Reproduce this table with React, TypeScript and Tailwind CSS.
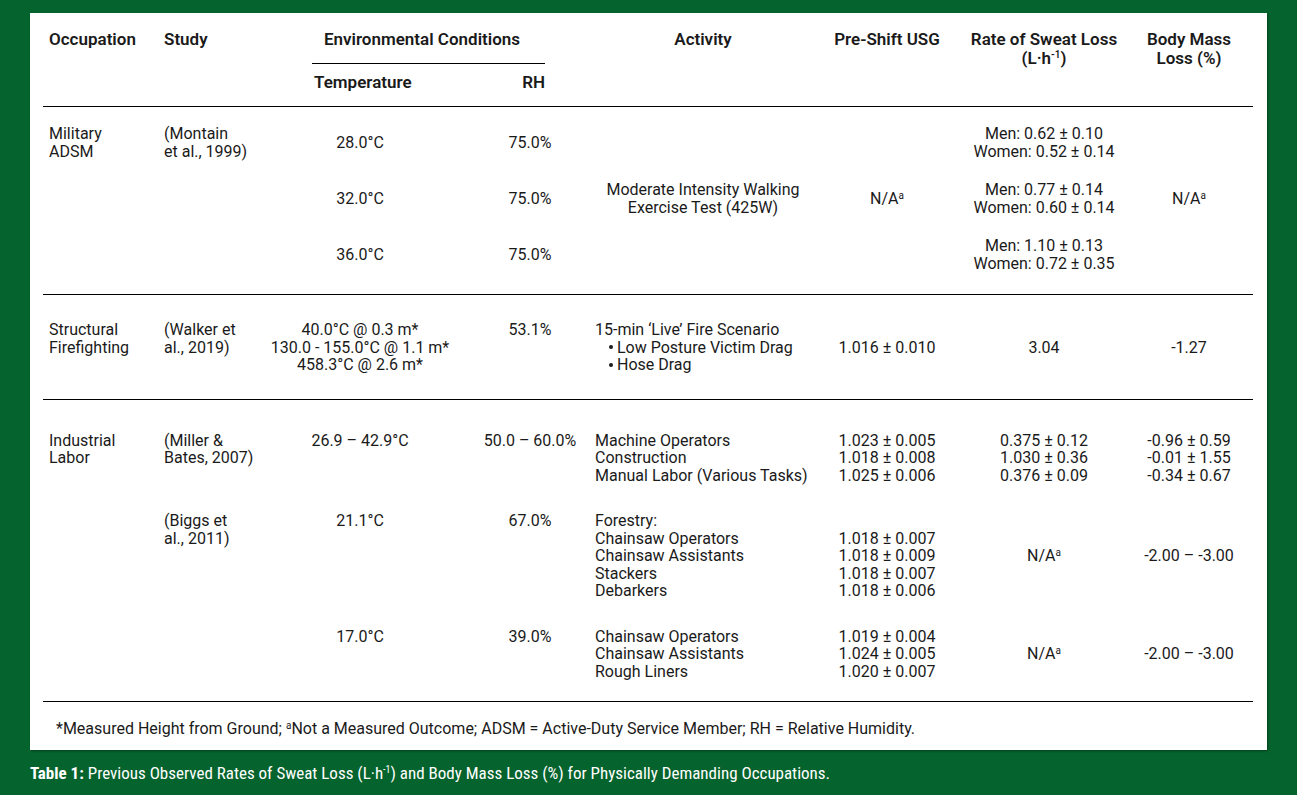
import React from "react";

// column widths (px): occupation, study, temperature, RH, activity, USG, sweat rate, body mass
const COLS = "grid grid-cols-[115px_97px_210px_130px_216px_152px_162px_128px]";

function Sup({ children }: { children: React.ReactNode }) {
  return <span className="text-[10px] leading-none align-top relative top-[1px]">{children}</span>;
}

function NA() {
  return (
    <span>
      N/A<Sup>a</Sup>
    </span>
  );
}

function Lines({ items }: { items: React.ReactNode[] }) {
  return (
    <div className="flex flex-col">
      {items.map((t, i) => (
        <div key={i} className="whitespace-nowrap">
          {t}
        </div>
      ))}
    </div>
  );
}

function Header() {
  return (
    <div className={`${COLS} pt-[17px] pb-[14px] border-b border-black leading-[19px] text-[17px] font-semibold`}>
      <div className="pl-[6px]">Occupation</div>
      <div className="pl-[6px]">Study</div>
      <div className="col-span-2 flex flex-col">
        <div className="text-center pr-[6px]">Environmental Conditions</div>
        <div className="ml-[57px] w-[233px] mt-[14px] border-t border-black pt-[9px] flex justify-between">
          <span className="pl-[2px]">Temperature</span>
          <span>RH</span>
        </div>
      </div>
      <div className="text-center">Activity</div>
      <div className="text-center">Pre-Shift USG</div>
      <div className="text-center whitespace-nowrap">
        Rate of Sweat Loss
        <br />
        (L·h<Sup>-1</Sup>)
      </div>
      <div className="text-center">
        Body Mass
        <br />
        Loss (%)
      </div>
    </div>
  );
}

function MilitaryGroup() {
  const temps = ["28.0°C", "32.0°C", "36.0°C"];
  const rows = ["row-start-1", "row-start-2", "row-start-3"];
  const rates = [
    ["Men: 0.62 ± 0.10", "Women: 0.52 ± 0.14"],
    ["Men: 0.77 ± 0.14", "Women: 0.60 ± 0.14"],
    ["Men: 1.10 ± 0.13", "Women: 0.72 ± 0.35"],
  ];
  return (
    <div className="pt-[18px] pb-[22px] border-b border-black">
      <div className={`${COLS} grid-rows-[35px_35px_35px] gap-y-[21px]`}>
        <div className="col-start-1 row-start-1 row-span-3 pl-[6px]">
          Military
          <br />
          ADSM
        </div>
        <div className="col-start-2 row-start-1 row-span-3 pl-[6px] whitespace-nowrap">
          (Montain
          <br />
          et al., 1999)
        </div>
        {temps.map((t, i) => (
          <React.Fragment key={t}>
            <div className={`col-start-3 ${rows[i]} flex items-center justify-center`}>{t}</div>
            <div className={`col-start-4 ${rows[i]} flex items-center justify-center`}>75.0%</div>
            <div className={`col-start-7 ${rows[i]} text-center whitespace-nowrap`}>
              {rates[i][0]}
              <br />
              {rates[i][1]}
            </div>
          </React.Fragment>
        ))}
        <div className="col-start-5 row-start-1 row-span-3 self-center text-center whitespace-nowrap">
          Moderate Intensity Walking
          <br />
          Exercise Test (425W)
        </div>
        <div className="col-start-6 row-start-1 row-span-3 self-center text-center">
          <NA />
        </div>
        <div className="col-start-8 row-start-1 row-span-3 self-center text-center">
          <NA />
        </div>
      </div>
    </div>
  );
}

function FirefightingGroup() {
  return (
    <div className="pt-[26px] pb-[25px] border-b border-black">
      <div className={COLS}>
        <div className="pl-[6px]">
          Structural
          <br />
          Firefighting
        </div>
        <div className="pl-[6px] whitespace-nowrap">
          (Walker et
          <br />
          al., 2019)
        </div>
        <div className="text-center">
          <Lines items={["40.0°C @ 0.3 m*", "130.0 - 155.0°C @ 1.1 m*", "458.3°C @ 2.6 m*"]} />
        </div>
        <div className="text-center">53.1%</div>
        <div className="whitespace-nowrap">
          <div>15-min ‘Live’ Fire Scenario</div>
          <div className="pl-[14px] flex items-center gap-[4px]">
            <span className="w-[4px] h-[4px] rounded-full bg-[#1a1a1a]" />
            Low Posture Victim Drag
          </div>
          <div className="pl-[14px] flex items-center gap-[4px]">
            <span className="w-[4px] h-[4px] rounded-full bg-[#1a1a1a]" />
            Hose Drag
          </div>
        </div>
        <div className="self-center text-center">1.016 ± 0.010</div>
        <div className="self-center text-center">3.04</div>
        <div className="self-center text-center">-1.27</div>
      </div>
    </div>
  );
}

function IndustrialGroup() {
  return (
    <div className="pt-[32px] pb-[21px] border-b border-black">
      <div className={`${COLS} gap-y-[28px]`}>
        <div className="col-start-1 row-start-1 row-span-3 pl-[6px]">
          Industrial
          <br />
          Labor
        </div>

        {/* Miller & Bates */}
        <div className="col-start-2 row-start-1 pl-[6px] whitespace-nowrap">
          (Miller &amp;
          <br />
          Bates, 2007)
        </div>
        <div className="col-start-3 row-start-1 text-center">26.9 – 42.9°C</div>
        <div className="col-start-4 row-start-1 text-center whitespace-nowrap">50.0 – 60.0%</div>
        <div className="col-start-5 row-start-1">
          <Lines items={["Machine Operators", "Construction", "Manual Labor (Various Tasks)"]} />
        </div>
        <div className="col-start-6 row-start-1 text-center">
          <Lines items={["1.023 ± 0.005", "1.018 ± 0.008", "1.025 ± 0.006"]} />
        </div>
        <div className="col-start-7 row-start-1 text-center">
          <Lines items={["0.375 ± 0.12", "1.030 ± 0.36", "0.376 ± 0.09"]} />
        </div>
        <div className="col-start-8 row-start-1 text-center">
          <Lines items={["-0.96 ± 0.59", "-0.01 ± 1.55", "-0.34 ± 0.67"]} />
        </div>

        {/* Biggs et al. */}
        <div className="col-start-2 row-start-2 pl-[6px] whitespace-nowrap">
          (Biggs et
          <br />
          al., 2011)
        </div>
        <div className="col-start-3 row-start-2 text-center">21.1°C</div>
        <div className="col-start-4 row-start-2 text-center">67.0%</div>
        <div className="col-start-5 row-start-2">
          <Lines items={["Forestry:", "Chainsaw Operators", "Chainsaw Assistants", "Stackers", "Debarkers"]} />
        </div>
        <div className="col-start-6 row-start-2 text-center">
          <Lines items={["\u00a0", "1.018 ± 0.007", "1.018 ± 0.009", "1.018 ± 0.007", "1.018 ± 0.006"]} />
        </div>
        <div className="col-start-7 row-start-2 self-center text-center">
          <NA />
        </div>
        <div className="col-start-8 row-start-2 self-center text-center whitespace-nowrap">-2.00 – -3.00</div>

        {/* second forestry condition */}
        <div className="col-start-3 row-start-3 text-center">17.0°C</div>
        <div className="col-start-4 row-start-3 text-center">39.0%</div>
        <div className="col-start-5 row-start-3">
          <Lines items={["Chainsaw Operators", "Chainsaw Assistants", "Rough Liners"]} />
        </div>
        <div className="col-start-6 row-start-3 text-center">
          <Lines items={["1.019 ± 0.004", "1.024 ± 0.005", "1.020 ± 0.007"]} />
        </div>
        <div className="col-start-7 row-start-3 self-center text-center">
          <NA />
        </div>
        <div className="col-start-8 row-start-3 self-center text-center whitespace-nowrap">-2.00 – -3.00</div>
      </div>
    </div>
  );
}

export default function App() {
  return (
    <div className="w-[1297px] h-[795px] bg-[#05632d] pt-[13px] px-[30px] font-['Roboto',sans-serif]">
      <div className="w-[1237px] h-[737px] bg-white pl-[13px] pr-[14px] text-[16px] leading-[17.5px] text-[#1a1a1a] shadow-[1px_1px_2px_rgba(0,0,0,0.35)]">
        <Header />
        <MilitaryGroup />
        <FirefightingGroup />
        <IndustrialGroup />
        <div className="pt-[18px] pl-[13px] whitespace-nowrap">
          *Measured Height from Ground; <Sup>a</Sup>Not a Measured Outcome; ADSM = Active-Duty Service Member; RH = Relative
          Humidity.
        </div>
      </div>
      <div className="mt-[14px] text-white text-[17px] leading-[19px] font-['Liberation_Sans_Narrow','Roboto_Condensed',sans-serif]">
        <span className="font-bold">Table 1:</span> Previous Observed Rates of Sweat Loss (L·h<Sup>-1</Sup>) and Body Mass Loss (%)
        for Physically Demanding Occupations.
      </div>
    </div>
  );
}
